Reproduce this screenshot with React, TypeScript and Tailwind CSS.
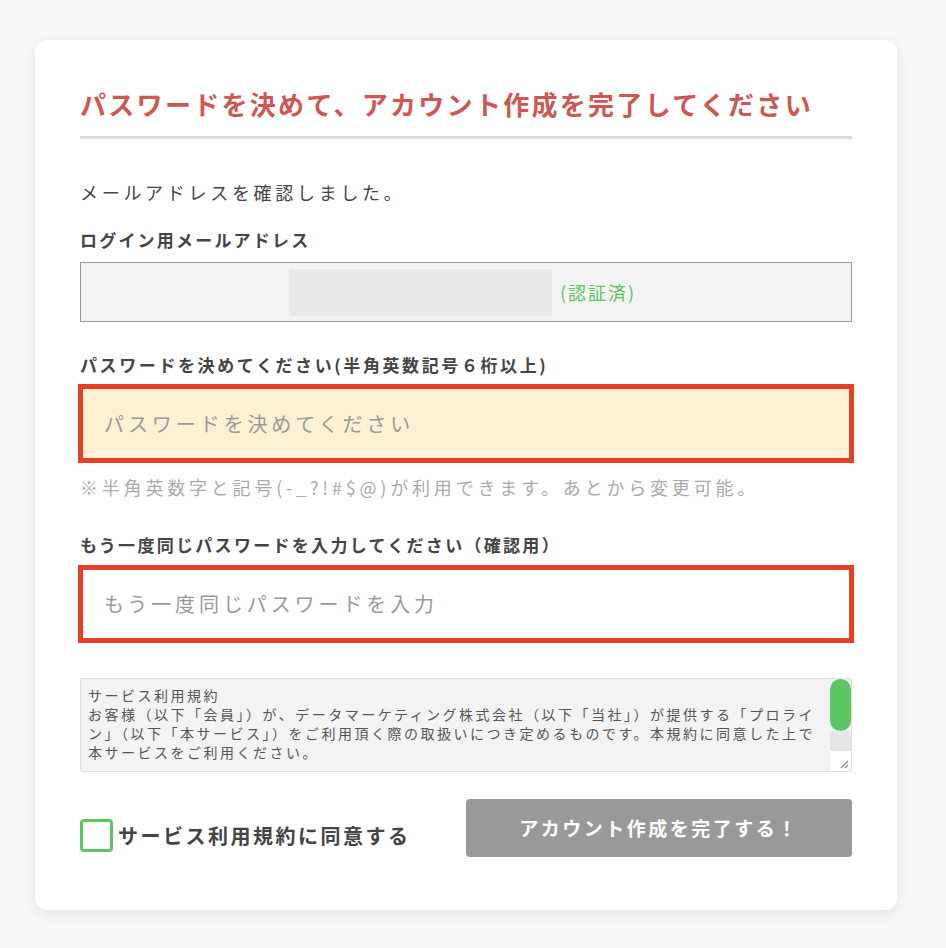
const jp = { fontFamily: '"Noto Sans CJK JP", "Noto Sans", sans-serif' }

const termsLines = [
  'サービス利用規約',
  'お客様（以下「会員」）が、データマーケティング株式会社（以下「当社」）が提供する「プロライ',
  'ン」（以下「本サービス」）をご利用頂く際の取扱いにつき定めるものです。本規約に同意した上で',
  '本サービスをご利用ください。',
]

function Label({ children, className }: { children: React.ReactNode; className: string }) {
  return (
    <div className={`text-[17px] leading-[24px] font-bold text-[#444] ${className}`}>{children}</div>
  )
}

export default function App() {
  return (
    <div className="min-h-[948px] bg-[#f7f7f7] pt-[40px] pb-[38px]" style={jp}>
      <div className="ml-[35px] w-[862px] rounded-[12px] bg-white px-[45px] pt-[44px] pb-[53px] shadow-[0_4px_14px_rgba(0,0,0,0.08)]">
        <h1 className="h-[55px] border-b-[3px] border-[#dcdcdc] pb-[12px] text-[26px] leading-[40px] font-bold tracking-[2.3px] text-[#cf5752]">
          パスワードを決めて、アカウント作成を完了してください
        </h1>

        <p className="mt-[39px] text-[18px] leading-[28px] tracking-[3.7px] text-[#444]">メールアドレスを確認しました。</p>

        <Label className="mt-[22px] tracking-[2.2px]">ログイン用メールアドレス</Label>
        <div className="mt-[10px] flex h-[60px] items-center border border-[#9a9a9a] bg-[#f3f3f3] pl-[208px]">
          <div className="h-[47px] w-[263px] bg-[#e9e9e9]" />
          <span className="ml-[8px] text-[18px] tracking-[2px] text-[#5bc662]">(認証済)</span>
        </div>

        <Label className="mt-[31px] tracking-[2.6px]">パスワードを決めてください(半角英数記号６桁以上)</Label>
        <div className="-mx-[2px] mt-[7px] flex h-[79px] items-center border-[5px] border-[#e64027] bg-[#fcf2d3] pl-[21px]">
          <span className="text-[20px] tracking-[3.9px] text-[#999]">パスワードを決めてください</span>
        </div>
        <p className="mt-[11px] text-[18px] leading-[26px] tracking-[3.8px] text-[#aaa]">
          ※半角英数字と記号(-_?!#$@)が利用できます。あとから変更可能。
        </p>

        <Label className="mt-[33px] tracking-[2.3px]">もう一度同じパスワードを入力してください（確認用）</Label>
        <div className="-mx-[2px] mt-[8px] flex h-[78px] items-center border-[5px] border-[#e64027] bg-white pl-[21px]">
          <span className="text-[20px] tracking-[3.9px] text-[#999]">もう一度同じパスワードを入力</span>
        </div>

        <div className="mt-[35px] flex h-[94px] overflow-hidden rounded-[3px] border border-[#dedede] bg-[#f3f3f3]">
          <div className="flex-1 overflow-hidden pt-[7px] pl-[7px] text-[14px] leading-[19px] tracking-[2.5px] whitespace-nowrap text-[#555]">
            {termsLines.map((line) => (
              <div key={line}>{line}</div>
            ))}
          </div>
          <div className="flex w-[21px] flex-col">
            <div className="h-[52px] rounded-full bg-[#5bc662]" />
            <div className="h-[20px] bg-[#e6e6e6]" />
            <div className="flex flex-1 items-end justify-end bg-white p-[2px]">
              <svg width="10" height="10" viewBox="0 0 10 10" stroke="#888" strokeWidth="1.2">
                <line x1="9" y1="2" x2="2" y2="9" />
                <line x1="9" y1="6" x2="6" y2="9" />
              </svg>
            </div>
          </div>
        </div>

        <div className="mt-[27px] flex items-start justify-between">
          <label className="mt-[20px] flex items-center gap-[5px]">
            <span className="h-[33px] w-[33px] rounded-[4px] border-[3px] border-[#5bc662] bg-white" />
            <span className="text-[20px] leading-[28px] font-bold tracking-[2.5px] text-[#444]">サービス利用規約に同意する</span>
          </label>
          <button className="flex h-[58px] w-[386px] items-center justify-center rounded-[4px] bg-[#999] text-[19px] font-bold tracking-[2.5px] text-white">
            アカウント作成を完了する！
          </button>
        </div>
      </div>
    </div>
  )
}
